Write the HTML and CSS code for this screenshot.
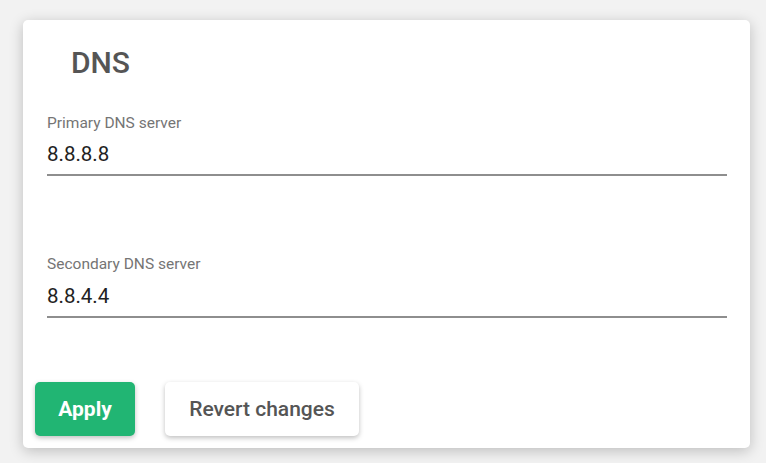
FILE: index.html
```html
<!DOCTYPE html>
<html lang="en">
<head>
<meta charset="utf-8">
<title>DNS</title>
<link rel="stylesheet" href="styles.css">
</head>
<body>
<section class="card">
  <h2 class="card-title">DNS</h2>
  <div class="field field-first">
    <label class="field-label">Primary DNS server</label>
    <div class="field-value">8.8.8.8</div>
  </div>
  <div class="field field-second">
    <label class="field-label">Secondary DNS server</label>
    <div class="field-value">8.8.4.4</div>
  </div>
  <div class="actions">
    <button class="btn btn-primary">Apply</button>
    <button class="btn btn-secondary">Revert changes</button>
  </div>
</section>
</body>
</html>
```

FILE: styles.css
```css
html, body {
  margin: 0;
  padding: 0;
}
body {
  background: #f2f2f2;
  font-family: Roboto, "Liberation Sans", sans-serif;
  width: 766px;
  height: 463px;
  overflow: hidden;
  padding-top: 20px;
  padding-left: 23px;
  box-sizing: border-box;
}
.card {
  width: 727px;
  height: 428px;
  box-sizing: border-box;
  background: #fff;
  border-radius: 5px;
  box-shadow: 0 3px 14px rgba(0, 0, 0, 0.22);
  padding: 22.5px 23px 0 24px;
  display: flex;
  flex-direction: column;
}
.card-title {
  margin: 0;
  padding-left: 24px;
  font-size: 30px;
  line-height: 40px;
  font-weight: 500;
  color: #555;
}
.field {
  display: flex;
  flex-direction: column;
  padding-bottom: 6px;
  border-bottom: 2px solid #8e8e8e;
}
.field-first {
  margin-top: 30px;
}
.field-second {
  margin-top: 78.4px;
}
.field-label {
  font-size: 15.5px;
  line-height: 20px;
  color: #757575;
}
.field-value {
  margin-top: 7.6px;
  font-size: 20.5px;
  line-height: 28px;
  color: #222;
}
.actions {
  margin-top: 64px;
  margin-left: -12px;
  display: flex;
  gap: 30px;
}
.btn {
  height: 54px;
  border: none;
  border-radius: 5px;
  font-family: Roboto, "Liberation Sans", sans-serif;
  font-size: 21px;
  cursor: pointer;
  box-shadow: 0 2px 5px rgba(0, 0, 0, 0.25);
}
.btn-primary {
  width: 100px;
  background: #21b573;
  color: #fff;
  font-weight: 700;
}
.btn-secondary {
  width: 194px;
  background: #fff;
  color: #555;
  font-weight: 500;
}
```
